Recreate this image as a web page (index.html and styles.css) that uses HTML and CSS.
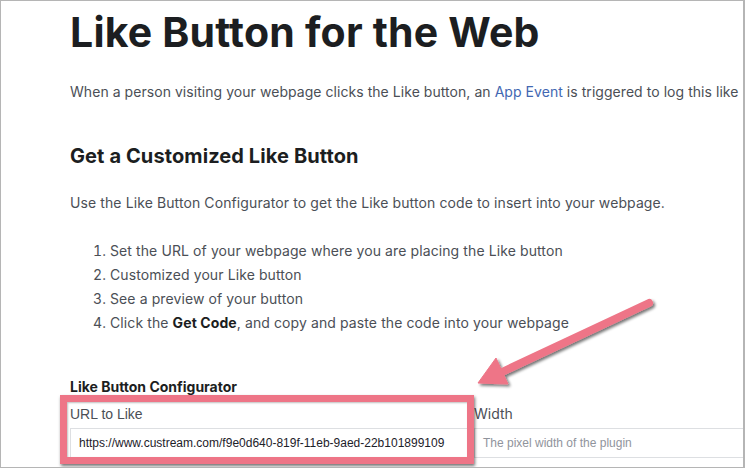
FILE: index.html
```html
<!DOCTYPE html>
<html lang="en">
<head>
<meta charset="utf-8">
<title>Like Button for the Web</title>
<link rel="stylesheet" href="styles.css">
</head>
<body>
<div class="frame">
  <main class="content">
    <h1 class="title">Like Button for the Web</h1>
    <p class="intro">When a person visiting your webpage clicks the Like button, an <a class="link" href="#">App Event</a> is triggered to log this like</p>
    <h2 class="section">Get a Customized Like Button</h2>
    <p class="text">Use the Like Button Configurator to get the Like button code to insert into your webpage.</p>
    <ol class="steps">
      <li>Set the URL of your webpage where you are placing the Like button</li>
      <li>Customized your Like button</li>
      <li>See a preview of your button</li>
      <li>Click the <b>Get Code</b>, and copy and paste the code into your webpage</li>
    </ol>
    <h3 class="config-title">Like Button Configurator</h3>
    <div class="form">
      <div class="field field-url">
        <label class="label label-url">URL to Like</label>
        <div class="input input-url">https://www.custream.com/f9e0d640-819f-11eb-9aed-22b101899109</div>
      </div>
      <div class="field field-width">
        <label class="label label-width">Width</label>
        <div class="input input-width placeholder">The pixel width of the plugin</div>
      </div>
    </div>
  </main>
  <div class="highlight"></div>
  <svg class="arrow" width="745" height="468" viewBox="0 0 745 468">
    <defs>
      <filter id="sh" x="-20%" y="-20%" width="140%" height="140%">
        <feGaussianBlur in="SourceAlpha" stdDeviation="1.6"/>
        <feOffset dx="1.5" dy="2" result="b"/>
        <feComponentTransfer><feFuncA type="linear" slope="0.55"/></feComponentTransfer>
        <feMerge><feMergeNode/><feMergeNode in="SourceGraphic"/></feMerge>
      </filter>
    </defs>
    <g filter="url(#sh)" fill="#ee7587" stroke="#ee7587">
      <line x1="649" y1="303" x2="500" y2="373" stroke-width="8" stroke-linecap="round"/>
      <polygon points="478,383 496,358 508,384" stroke-width="1" stroke-linejoin="round"/>
    </g>
  </svg>
</div>
</body>
</html>
```
FILE: styles.css
```css
* { box-sizing: border-box; }
html, body { margin: 0; padding: 0; background: #fff; }
.frame {
  position: relative;
  width: 745px;
  height: 468px;
  border: 1px solid #b5b5b5;
  border-right-width: 2px;
  overflow: hidden;
  font-family: Inter, "Noto Sans", sans-serif;
  color: #4b4f56;
}
.content {
  padding: 7px 0 0 69px;
  white-space: nowrap;
}
.title {
  margin: 0;
  font-size: 41px;
  line-height: 48px;
  font-weight: 700;
  color: #1c1e21;
  letter-spacing: 0.2px;
}
.intro, .text {
  margin: 0;
  font-size: 14px;
  line-height: 20px;
  letter-spacing: 0.1px;
}
.intro { margin-top: 26px; letter-spacing: 0.05px; }
.link { color: #4267b2; text-decoration: none; }
.section {
  margin: 42px 0 0;
  font-size: 20px;
  line-height: 24px;
  font-weight: 700;
  color: #1c1e21;
  letter-spacing: 0.1px;
}
.text { margin-top: 25px; }
.steps {
  margin: 26px 0 0;
  padding-left: 40px;
  font-size: 14px;
  line-height: 24px;
  letter-spacing: 0.1px;
}
.steps b { color: #1c1e21; font-weight: 700; }
.config-title {
  margin: 42px 0 0;
  font-size: 14px;
  line-height: 20px;
  font-weight: 700;
  color: #1c1e21;
}
.form {
  display: grid;
  grid-template-columns: 404px 1fr;
  margin-top: 7px;
}
.field { display: flex; flex-direction: column; gap: 4px; }
.label {
  font-size: 14px;
  line-height: 20px;
  color: #4b4f56;
}
.label-url { font-family: "Liberation Sans", Arial, sans-serif; }
.input {
  height: 30px;
  border: 1px solid #dddfe2;
  font-family: "Liberation Sans", Arial, sans-serif;
  font-size: 12px;
  line-height: 28px;
  padding: 0 8px;
  color: #1d2129;
}
.input-url { width: 398px; }
.input-width { padding-left: 8px; border-right: none; }
.placeholder { color: #90949c; }
.highlight {
  position: absolute;
  left: 59px;
  top: 394px;
  width: 414px;
  height: 69px;
  border: 7px solid #ee7587;
  box-shadow: 1px 2px 3px rgba(0,0,0,0.55), inset 1px 1px 2px rgba(0,0,0,0.25);
}
.arrow {
  position: absolute;
  left: -1px;
  top: -1px;
}
```
